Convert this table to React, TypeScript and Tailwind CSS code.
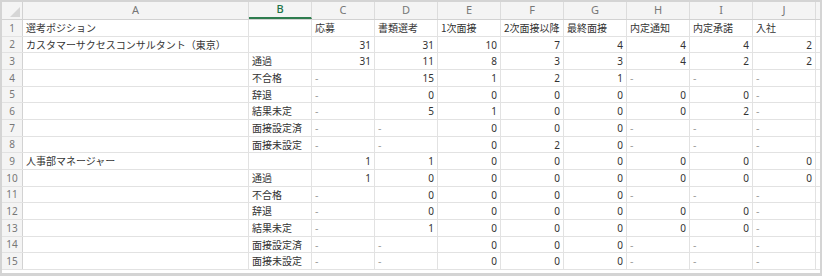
import React from "react";

type Cell = string;
const rows: Cell[][] = [
  ["選考ポジション", "", "応募", "書類選考", "1次面接", "2次面接以降", "最終面接", "内定通知", "内定承諾", "入社"],
  ["カスタマーサクセスコンサルタント（東京）", "", "31", "31", "10", "7", "4", "4", "4", "2"],
  ["", "通過", "31", "11", "8", "3", "3", "4", "2", "2"],
  ["", "不合格", "-", "15", "1", "2", "1", "-", "-", "-"],
  ["", "辞退", "-", "0", "0", "0", "0", "0", "0", "-"],
  ["", "結果未定", "-", "5", "1", "0", "0", "0", "2", "-"],
  ["", "面接設定済", "-", "-", "0", "0", "0", "-", "-", "-"],
  ["", "面接未設定", "-", "-", "0", "2", "0", "-", "-", "-"],
  ["人事部マネージャー", "", "1", "1", "0", "0", "0", "0", "0", "0"],
  ["", "通過", "1", "0", "0", "0", "0", "0", "0", "0"],
  ["", "不合格", "-", "0", "0", "0", "0", "-", "-", "-"],
  ["", "辞退", "-", "0", "0", "0", "0", "0", "0", "-"],
  ["", "結果未定", "-", "1", "0", "0", "0", "0", "0", "-"],
  ["", "面接設定済", "-", "-", "0", "0", "0", "-", "-", "-"],
  ["", "面接未設定", "-", "-", "0", "0", "0", "-", "-", "-"],
];

const heights = [17, 16, 17, 17, 16, 17, 17, 16, 17, 17, 16, 17, 17, 16, 17];
const letters = ["A", "B", "C", "D", "E", "F", "G", "H", "I", "J"];
const widths = [226, 63, 63, 63, 63, 63, 63, 63, 63, 63];

const jp = { fontFamily: '"Noto Sans CJK JP", "Noto Sans", sans-serif' };
const lat = { fontFamily: '"Noto Sans", "Liberation Sans", sans-serif' };

function isNum(s: string) {
  return /^[0-9]+$/.test(s);
}

export default function App() {
  return (
    <div className="w-[822px] h-[276px] bg-[#d4d4d4] pl-[2px] pt-[2px] overflow-hidden">
      <div className="w-[818px] h-[271px] bg-white overflow-hidden" style={jp}>
        {/* header row */}
        <div className="flex h-[18px] bg-[#f4f4f4] border-b border-[#d2d2d2]">
          <div className="w-[21px] shrink-0 border-r border-[#d2d2d2] relative">
            <svg className="absolute right-[2px] bottom-[2px]" width="10" height="10" viewBox="0 0 10 10">
              <polygon points="10,0 10,10 0,10" fill="#d6d6d6" />
            </svg>
          </div>
          {letters.map((l, i) => (
            <div
              key={l}
              className={`shrink-0 flex items-center justify-center text-[11px] border-r border-[#dcdcdc] ${
                l === "B" ? "text-[#217346] border-b-2 border-b-[#2f7d4f] font-medium" : "text-[#777777]"
              }`}
              style={{ width: widths[i], ...lat }}
            >
              {l}
            </div>
          ))}
          <div className="flex-1" />
        </div>
        {rows.map((r, ri) => (
          <div key={ri} className="flex border-b border-[#e2e2e2]" style={{ height: heights[ri] - 1 + 1 }}>
            <div
              className="w-[21px] shrink-0 bg-[#f4f4f4] border-r border-[#d2d2d2] flex items-center justify-center text-[10px] text-[#777777]"
              style={lat}
            >
              {ri + 1}
            </div>
            {r.map((c, ci) => {
              const num = isNum(c);
              const dash = c === "-";
              return (
                <div
                  key={ci}
                  className={`shrink-0 flex items-center border-r border-[#e2e2e2] px-[3px] text-[10px] leading-none whitespace-nowrap overflow-visible ${
                    num ? "justify-end text-[#3a3a3a]" : "justify-start"
                  } ${dash ? "text-[#888888]" : "text-[#333333]"}`}
                  style={{ width: widths[ci], ...(num ? lat : {}) }}
                >
                  {c}
                </div>
              );
            })}
            <div className="flex-1" />
          </div>
        ))}
      </div>
    </div>
  );
}
